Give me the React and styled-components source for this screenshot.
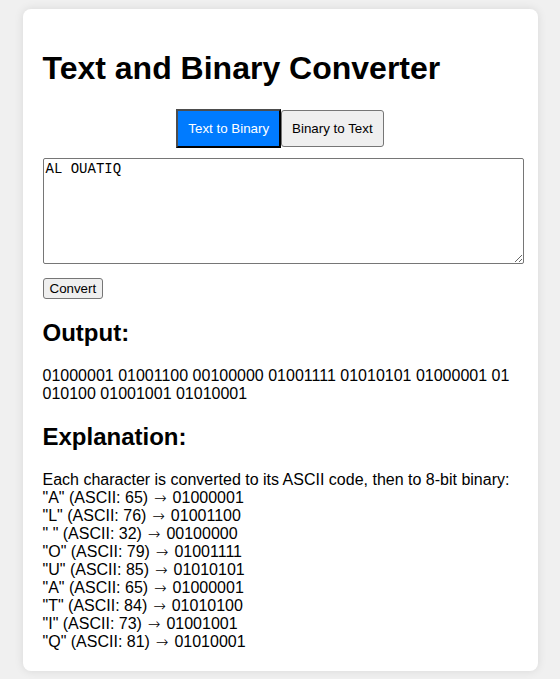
import React, { useState } from 'react';
import styled, { createGlobalStyle } from 'styled-components';

const INPUT = 'AL OUATIQ';

const toBinary = (ch) => ch.charCodeAt(0).toString(2).padStart(8, '0');

const App = () => {
  const [mode, setMode] = useState('text');
  const [value, setValue] = useState(INPUT);
  const chars = value.split('');
  const output = chars.map(toBinary).join(' ');

  return (
    <>
      <GlobalStyle />
      <Card>
        <Title>Text and Binary Converter</Title>
        <ModeBar>
          <ModeButton $active={mode === 'text'} onClick={() => setMode('text')}>
            Text to Binary
          </ModeButton>
          <ModeButton $active={mode === 'binary'} onClick={() => setMode('binary')}>
            Binary to Text
          </ModeButton>
        </ModeBar>
        <Input value={value} onChange={(e) => setValue(e.target.value)} />
        <ActionRow>
          <ConvertButton>Convert</ConvertButton>
        </ActionRow>
        <Heading>Output:</Heading>
        <Output>{output}</Output>
        <Heading>Explanation:</Heading>
        <Explanation>
          <Line>Each character is converted to its ASCII code, then to 8-bit binary:</Line>
          {chars.map((ch, i) => (
            <Line key={i}>
              "{ch}" (ASCII: {ch.charCodeAt(0)}) <Arrow>→</Arrow> {toBinary(ch)}
            </Line>
          ))}
        </Explanation>
      </Card>
    </>
  );
};

//-----------Styles--------------

const GlobalStyle = createGlobalStyle`
  body {
    margin: 0;
    background: #f0f0f0;
    font-family: "Liberation Sans", Arial, sans-serif;
    color: #000;
  }
`;

const Card = styled.div`
  width: 475px;
  margin: 9px auto;
  padding: 20px;
  background: #fff;
  border-radius: 8px;
  box-shadow: 0 0 10px rgba(0, 0, 0, 0.1);
`;

const Title = styled.h1`
  font-size: 32px;
  margin: 21.44px 0;
`;

const ModeBar = styled.div`
  display: flex;
  justify-content: center;
  align-items: center;
`;

const ModeButton = styled.button`
  font-family: "Liberation Sans", Arial, sans-serif;
  font-size: 13.33px;
  padding: 10px;
  margin: 0;
  cursor: pointer;
  background: ${(p) => (p.$active ? '#007bff' : '#efefef')};
  color: ${(p) => (p.$active ? '#fff' : '#000')};
  border: ${(p) => (p.$active ? '2px solid' : '1px solid #767676')};
  border-color: ${(p) => (p.$active ? '#4d4d4d #000 #000 #4d4d4d' : '#767676')};
  border-radius: ${(p) => (p.$active ? '0' : '3px')};
`;

const Input = styled.textarea`
  display: block;
  width: 100%;
  height: 100px;
  margin: 10px 0 14px;
  padding: 2px;
  border: 1px solid #767676;
  border-radius: 2px;
  font-family: "Liberation Mono", "DejaVu Sans Mono", monospace;
  font-size: 14px;
  color: #000;
`;

const ActionRow = styled.div`
  line-height: normal;
`;

const ConvertButton = styled.button`
  font-family: "Liberation Sans", Arial, sans-serif;
  font-size: 13.33px;
  padding: 2px 6px;
  background: #efefef;
  border: 1px solid #767676;
  border-radius: 3px;
  color: #000;
  cursor: pointer;
`;

const Heading = styled.h2`
  font-size: 24px;
  margin: 19.92px 0;
`;

const Output = styled.p`
  font-size: 16px;
  margin: 16px 0;
  word-break: break-all;
`;

const Explanation = styled.div`
  font-size: 16px;
`;

const Line = styled.div``;

const Arrow = styled.span`
  font-family: "DejaVu Sans", sans-serif;
  font-weight: 200;
  font-size: 15px;
  line-height: 0;
  margin: 0 1.5px;
`;

//-----------------End Styles---------------

export default App;
